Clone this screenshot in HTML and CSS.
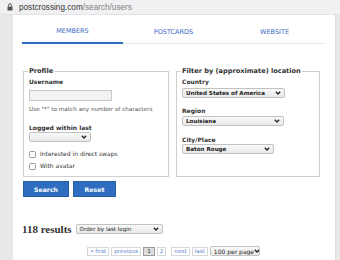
FILE: index.html
```html
<!DOCTYPE html>
<html>
<head>
<meta charset="utf-8">
<link rel="stylesheet" href="styles.css">
</head>
<body>
<div class="urlbar">
  <svg class="lock" width="6" height="8" viewBox="0 0 6 8"><path d="M1.5 3.5V2.3a1.5 1.5 0 0 1 3 0v1.2" fill="none" stroke="#555" stroke-width="1"/><rect x="0.5" y="3.5" width="5" height="4" rx="0.6" fill="#555"/></svg>
  <span class="host">postcrossing.com</span><span class="path">/search/users</span>
</div>
<div class="viewport">
  <div class="gutter-left"></div>
  <div class="content">
    <nav class="tabs">
      <div class="tab active">MEMBERS</div>
      <div class="tab">POSTCARDS</div>
      <div class="tab">WEBSITE</div>
    </nav>
    <div class="filters">
      <fieldset class="box">
        <legend>Profile</legend>
        <div class="label l-user">Username</div>
        <div class="input"></div>
        <div class="help">Use "*" to match any number of characters</div>
        <div class="label l-logged">Logged within last</div>
        <div class="select s-logged"><span></span><svg class="chev" width="6" height="4" viewBox="0 0 6 4"><path d="M0.8 0.8L3 3L5.2 0.8" fill="none" stroke="#222" stroke-width="1.3"/></svg></div>
        <label class="check c1"><span class="cb"></span>Interested in direct swaps</label>
        <label class="check c2"><span class="cb"></span>With avatar</label>
      </fieldset>
      <fieldset class="box">
        <legend>Filter by (approximate) location</legend>
        <div class="label l-country">Country</div>
        <div class="select s-country"><span>United States of America</span><svg class="chev" width="6" height="4" viewBox="0 0 6 4"><path d="M0.8 0.8L3 3L5.2 0.8" fill="none" stroke="#222" stroke-width="1.3"/></svg></div>
        <div class="label l-region">Region</div>
        <div class="select s-region"><span>Louisiana</span><svg class="chev" width="6" height="4" viewBox="0 0 6 4"><path d="M0.8 0.8L3 3L5.2 0.8" fill="none" stroke="#222" stroke-width="1.3"/></svg></div>
        <div class="label l-city">City/Place</div>
        <div class="select s-city"><span>Baton Rouge</span><svg class="chev" width="6" height="4" viewBox="0 0 6 4"><path d="M0.8 0.8L3 3L5.2 0.8" fill="none" stroke="#222" stroke-width="1.3"/></svg></div>
      </fieldset>
    </div>
    <div class="buttons">
      <button class="btn b-search">Search</button>
      <button class="btn b-reset">Reset</button>
    </div>
    <div class="results">
      <span class="count">118 results</span>
      <div class="select s-order"><span>Order by last login</span><svg class="chev" width="6" height="4" viewBox="0 0 6 4"><path d="M0.8 0.8L3 3L5.2 0.8" fill="none" stroke="#222" stroke-width="1.3"/></svg></div>
    </div>
    <div class="pager">
      <span class="pg">« first</span>
      <span class="pg">previous</span>
      <span class="pg current">1</span>
      <span class="pg">2</span>
      <span class="pg p-next">next</span>
      <span class="pg">last</span>
      <div class="select s-per"><span>100 per page</span><svg class="chev" width="6" height="4" viewBox="0 0 6 4"><path d="M0.8 0.8L3 3L5.2 0.8" fill="none" stroke="#222" stroke-width="1.3"/></svg></div>
    </div>
  </div>
  <div class="gutter-right"></div>
</div>
</body>
</html>
```

FILE: styles.css
```css
* { box-sizing: border-box; }
html, body { margin: 0; padding: 0; }
body {
  width: 340px;
  height: 260px;
  overflow: hidden;
  font-family: "DejaVu Sans", Verdana, sans-serif;
  color: #333;
  background: #fff;
}
.urlbar {
  height: 15px;
  background: #f1f1f3;
  border-bottom: 1px solid #e2e2e4;
  display: flex;
  align-items: center;
  padding-left: 7px;
  font-family: "Liberation Sans", Arial, sans-serif;
  font-size: 8.2px;
}
.lock { margin-right: 6px; }
.host { color: #333; }
.path { color: #808080; }
.viewport {
  display: flex;
  height: 245px;
}
.gutter-left { width: 13px; background: #e9e8e6; }
.gutter-right { width: 5px; background: #e8e8e8; border-left: 1px solid #dcdcdc; }
.content {
  width: 322px;
  background: #fff;
  padding-left: 9px;
}
.tabs {
  display: flex;
  width: 303px;
  height: 29px;
  border-bottom: 1px solid #e4e4e4;
}
.tab {
  flex: 1;
  display: flex;
  align-items: center;
  justify-content: center;
  font-size: 6.5px;
  color: #3a68c4;
  padding-top: 5px;
}
.tab.active {
  border-bottom: 2px solid #2f6ac0;
  margin-bottom: -1px;
}
.filters {
  display: grid;
  grid-template-columns: 146px 144px;
  column-gap: 7px;
  margin-left: 1px;
  margin-top: 23px;
}
.box {
  margin: 0;
  min-width: 0;
  border: 1px solid #cfcfcf;
  padding: 0 5px;
  height: 110px;
}
.box legend {
  font-size: 6.6px;
  font-weight: bold;
  color: #333;
  padding: 0 1px;
  margin-left: -1px;
  line-height: 9px;
}
.label {
  font-size: 6px;
  font-weight: bold;
  color: #333;
  line-height: 8px;
}
.l-user { margin-top: 2px; }
.input {
  width: 83px;
  height: 11px;
  margin-top: 4px;
  background: #f2f2f2;
  border: 1px solid #c9c9c9;
}
.help {
  font-size: 5.7px;
  color: #555;
  line-height: 8px;
  margin-top: 4px;
}
.l-logged { margin-top: 11px; }
.select {
  display: flex;
  align-items: center;
  justify-content: space-between;
  height: 10px;
  padding: 0 3px 0 3px;
  background: linear-gradient(#f9f9f9, #e9e9e9);
  border: 1px solid #c2c2c2;
  border-radius: 2px;
  font-size: 5.6px;
  font-weight: bold;
  color: #222;
  white-space: nowrap;
  overflow: hidden;
}
.chev { flex: none; }
.s-logged { width: 62px; margin-top: 0; }
.check {
  display: flex;
  align-items: center;
  font-size: 6px;
  color: #333;
  line-height: 8px;
}
.cb {
  width: 7px;
  height: 7px;
  border: 1px solid #9a9a9a;
  border-radius: 1.5px;
  background: #fff;
  margin-right: 4px;
  flex: none;
}
.c1 { margin-top: 8px; }
.c2 { margin-top: 4px; }
.l-country { margin-top: 2px; }
.s-country { width: 103px; margin-top: 2px; }
.l-region { margin-top: 9px; }
.s-region { width: 102px; margin-top: 1px; }
.l-city { margin-top: 10px; }
.s-city { width: 92px; margin-top: 0; }
.buttons {
  display: flex;
  gap: 4px;
  margin-top: 4px;
  margin-left: 1px;
}
.btn {
  height: 16px;
  border: 1px solid #285fa9;
  background: #2f6dc1;
  color: #fff;
  font-family: "DejaVu Sans", Verdana, sans-serif;
  font-size: 6.2px;
  font-weight: bold;
  padding: 0;
}
.b-search { width: 46px; }
.b-reset { width: 43px; }
.results {
  display: flex;
  align-items: center;
  margin-top: 26px;
  gap: 4px;
}
.count {
  font-family: "Liberation Serif", "Times New Roman", serif;
  font-weight: bold;
  font-size: 11px;
  color: #333;
}
.s-order { width: 87px; font-weight: normal; }
.pager {
  display: flex;
  align-items: center;
  justify-content: center;
  width: 303px;
  margin-top: 11px;
  gap: 2px;
}
.pg {
  height: 9px;
  display: flex;
  align-items: center;
  padding: 0 2px;
  border: 1px solid #d8d8d8;
  font-size: 5.6px;
  color: #5c86cf;
}
.pg.current {
  background: #dedede;
  border-color: #9c9c9c;
  color: #222;
  padding: 0 3px;
}
.p-next { margin-left: 3px; }
.s-per { width: 50px; font-weight: normal; height: 10px; font-size: 6px; }
```
